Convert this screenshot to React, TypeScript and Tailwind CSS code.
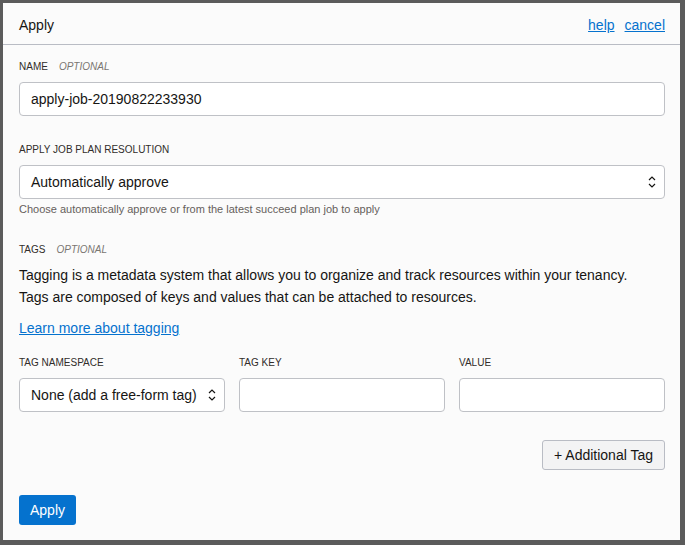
import React from "react";

function Chevrons() {
  return (
    <svg width="8" height="14" viewBox="0 0 8 14" fill="none" stroke="#161513" strokeWidth="1.2">
      <path d="M1 5 L4 2 L7 5" />
      <path d="M1 9 L4 12 L7 9" />
    </svg>
  );
}

function Label({ text, optional }: { text: string; optional?: boolean }) {
  return (
    <div className="text-[10px] leading-[14px] uppercase text-[#312d2a] flex">
      <span>{text}</span>
      {optional && <span className="ml-[11px] italic text-[#7a7672]">Optional</span>}
    </div>
  );
}

const field =
  "h-[34px] w-full rounded-[4px] border border-[#bfc1c6] bg-white px-[11px] text-[14px] text-[#161513] flex items-center";

export default function App() {
  return (
    <div
      className="w-[685px] h-[545px] bg-[#5b5b5b] pt-[3px] pl-[3px]"
      style={{ fontFamily: '"Liberation Sans", Arial, sans-serif' }}
    >
      <div className="w-[677px] h-[537px] bg-[#fbfbfb] flex flex-col">
        <div className="h-[42px] border-b border-[#b9bcc4] flex items-center justify-between pl-4 pr-[15px] pt-[4px]">
          <div className="text-[14px] text-[#161513]">Apply</div>
          <div className="flex gap-[10px] text-[14px] text-[#0572ce]">
            <span className="underline">help</span>
            <span className="underline">cancel</span>
          </div>
        </div>

        <div className="pl-4 pr-[15px] pt-[15px]">
          <Label text="Name" optional />
          <div className={`${field} mt-[8px]`}>apply-job-20190822233930</div>

          <div className="mt-[27px]">
            <Label text="Apply job plan resolution" />
          </div>
          <div className={`${field} mt-[8px] justify-between pr-[8px]`}>
            <span>Automatically approve</span>
            <Chevrons />
          </div>
          <div className="mt-[3px] text-[11px] leading-[14px] text-[#665f5b]">
            Choose automatically approve or from the latest succeed plan job to apply
          </div>

          <div className="mt-[27px]">
            <Label text="Tags" optional />
          </div>
          <p className="mt-[7px] text-[14px] leading-[22px] text-[#161513]">
            Tagging is a metadata system that allows you to organize and track resources within your tenancy.
            <br />
            Tags are composed of keys and values that can be attached to resources.
          </p>
          <div className="mt-[9px] text-[14px] leading-[22px] text-[#0572ce] underline">
            Learn more about tagging
          </div>

          <div className="mt-[17px] grid grid-cols-3 gap-x-[14px]">
            <Label text="Tag namespace" />
            <Label text="Tag key" />
            <Label text="Value" />
            <div className={`${field} mt-[8px] justify-between pr-[8px]`}>
              <span>None (add a free-form tag)</span>
              <Chevrons />
            </div>
            <div className={`${field} mt-[8px]`} />
            <div className={`${field} mt-[8px]`} />
          </div>

          <div className="mt-[28px] flex justify-end">
            <button className="h-[30px] px-[11px] rounded-[3px] border border-[#b9bcc4] bg-[#f3f3f4] text-[14px] text-[#161513]">
              + Additional Tag
            </button>
          </div>

          <div className="mt-[25px]">
            <button className="h-[30px] px-[11px] rounded-[3px] bg-[#0572ce] text-[14px] text-white">
              Apply
            </button>
          </div>
        </div>
      </div>
    </div>
  );
}
